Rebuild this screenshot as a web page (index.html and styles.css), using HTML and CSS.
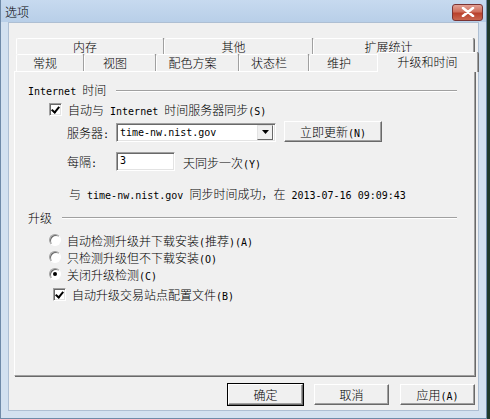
FILE: index.html
```html
<!DOCTYPE html>
<html lang="zh-CN">
   <head>
      <meta charset="UTF-8">
      <meta name="viewport" content="width=device-width, initial-scale=1.0">
      <title>选项</title>
      <link rel="stylesheet" href="styles.css">
   </head>

   <body>
      <div class="window">

         <!-------------------TITLE BAR------------------->
         <div class="titlebar">
            <span class="title">选项</span>
            <span class="close">
               <svg width="14" height="10" viewBox="0 0 14 10">
                  <path d="M2 1 L12 9 M12 1 L2 9" stroke="#fff" stroke-width="2.6" stroke-linecap="round"/>
               </svg>
            </span>
         </div>

         <div class="client">

            <!---------------------TABS---------------------->
            <div class="tab-row back">
               <div class="tab">内存</div>
               <div class="tab">其他</div>
               <div class="tab">扩展统计</div>
            </div>
            <div class="tab-row front">
               <div class="tab">常规</div>
               <div class="tab">视图</div>
               <div class="tab">配色方案</div>
               <div class="tab">状态栏</div>
               <div class="tab">维护</div>
               <div class="tab selected">升级和时间</div>
            </div>

            <!---------------------PANEL--------------------->
            <div class="panel">
               <div class="group-title"><span><span class="en">Internet </span>时间</span><i></i></div>

               <div class="row check-row">
                  <span class="checkbox checked"></span>
                  <span>自动与<span class="en"> Internet </span>时间服务器同步<span class="en">(S)</span></span>
               </div>

               <div class="row server-row">
                  <span class="label">服务器<span class="en">:</span></span>
                  <div class="combo">
                     <span class="combo-text en">time-nw.nist.gov</span>
                     <span class="combo-btn">
                        <svg width="7" height="4" viewBox="0 0 7 4"><path d="M0 0 H7 L3.5 4 Z" fill="#000"/></svg>
                     </span>
                  </div>
                  <button type="button" class="btn update">立即更新<span class="en">(N)</span></button>
               </div>

               <div class="row interval-row">
                  <span class="label">每隔<span class="en">:</span></span>
                  <div class="field en">3</div>
                  <span class="after">天同步一次<span class="en">(Y)</span></span>
               </div>

               <div class="status">与<span class="en"> time-nw.nist.gov </span>同步时间成功，在<span class="en"> 2013-07-16 09:09:43</span></div>

               <div class="group-title upgrade"><span>升级</span><i></i></div>

               <div class="row radio-row first">
                  <span class="radio"></span>
                  <span>自动检测升级并下载安装<span class="en">(</span>推荐<span class="en">)(A)</span></span>
               </div>
               <div class="row radio-row">
                  <span class="radio"></span>
                  <span>只检测升级但不下载安装<span class="en">(O)</span></span>
               </div>
               <div class="row radio-row">
                  <span class="radio checked"></span>
                  <span>关闭升级检测<span class="en">(C)</span></span>
               </div>

               <div class="row check-row site">
                  <span class="checkbox checked"></span>
                  <span>自动升级交易站点配置文件<span class="en">(B)</span></span>
               </div>
            </div>

            <!--------------------BUTTONS-------------------->
            <div class="buttons">
               <button type="button" class="btn default">确定</button>
               <button type="button" class="btn">取消</button>
               <button type="button" class="btn">应用<span class="en">(A)</span></button>
            </div>
         </div>
      </div>
   </body>
</html>
```

FILE: styles.css
```css
*{
   box-sizing: border-box;
   margin: 0;
   padding: 0;
}

body{
   background: #1f3a2c;
   font-family: "Noto Sans CJK SC", sans-serif;
   font-weight: 300;
   font-size: 12px;
   color: #000;
}

.en{
   font-family: "DejaVu Sans Mono", monospace;
   font-weight: 400;
   font-size: 10px;
}

/*******************WINDOW*******************/
.window{
   width: 487px;
   height: 419px;
   background: #d3e1f0;
   border: 1px solid #6f8aa8;
   border-top: none;
   display: flex;
   flex-direction: column;
}

.titlebar{
   height: 22px;
   display: flex;
   align-items: center;
   justify-content: space-between;
   padding: 0 3px 0 4px;
   background: linear-gradient(#c7daef, #b8cfe8);
}

.title{
   font-size: 12px;
   line-height: 14px;
   padding-top: 1px;
}

.close{
   width: 31px;
   height: 17px;
   margin-top: 2px;
   display: flex;
   align-items: center;
   justify-content: center;
   border: 1px solid #7a3434;
   border-radius: 3px;
   background: linear-gradient(#e2a195, #cf6f5d 45%, #b9412c 55%, #c9664f);
}

.client{
   flex: 1;
   margin: 0 7px 7px 7px;
   background: #f0f0f0;
   padding: 15px 3px 0 5px;
   border: 1px solid #aebfd3;
}

/********************TABS********************/
.tab-row{
   display: grid;
   margin-left: 2px;
   height: 16px;
}

.tab-row.back{
   grid-template-columns: 148px 149px 161px;
}

.tab-row.front{
   grid-template-columns: 68px 72px 83px 70px 70px 97px;
   height: 17px;
}

.tab{
   border-top: 1px solid #fff;
   border-left: 1px solid #fff;
   border-right: 1px solid #a0a0a0;
   box-shadow: 1px 0 0 #696969;
   border-radius: 2px 2px 0 0;
   text-align: center;
   line-height: 15px;
   padding-right: 10px;
   background: #f0f0f0;
}

.tab.selected{
   position: relative;
   z-index: 1;
   margin: -2px -2px -1px -2px;
   padding-right: 0;
   line-height: 18px;
}

/*******************PANEL********************/
.panel{
   height: 305px;
   border: 1px solid;
   border-color: #fff #a0a0a0 #a0a0a0 #fff;
   box-shadow: 1px 1px 0 #696969;
   padding: 12px 17px 0 13px;
}

.group-title{
   display: flex;
   align-items: center;
   gap: 10px;
   height: 14px;
   line-height: 14px;
}

.group-title i{
   flex: 1;
   height: 2px;
   border-top: 1px solid #a0a0a0;
   border-bottom: 1px solid #fff;
}

.group-title.upgrade{
   margin-top: 10px;
}

.row{
   display: flex;
   align-items: center;
   padding-left: 21px;
}

.check-row{
   height: 18px;
   margin-top: 2px;
   gap: 6px;
}

.check-row.site{
   margin-top: 3px;
   padding-left: 25px;
}

.checkbox{
   width: 13px;
   height: 13px;
   background: #fff;
   border: 1px solid;
   border-color: #a0a0a0 #fff #fff #a0a0a0;
   box-shadow: inset 1px 1px 0 #696969, inset -1px -1px 0 #e3e3e3;
   position: relative;
}

.checkbox.checked::after{
   content: "";
   position: absolute;
   left: 3px;
   top: 1px;
   width: 3px;
   height: 6px;
   border: solid #000;
   border-width: 0 2px 2px 0;
   transform: rotate(40deg);
}

.server-row{
   height: 22px;
   margin-top: 3px;
   padding-left: 39px;
}

.label{
   width: 49px;
}

.combo{
   width: 160px;
   height: 19px;
   background: #fff;
   border: 1px solid;
   border-color: #a0a0a0 #fff #fff #a0a0a0;
   box-shadow: inset 1px 1px 0 #696969, inset -1px -1px 0 #e3e3e3;
   display: flex;
   align-items: center;
   justify-content: space-between;
   padding: 1px 2px 1px 3px;
}

.combo-btn{
   width: 16px;
   height: 15px;
   background: #f0f0f0;
   border: 1px solid;
   border-color: #e3e3e3 #696969 #696969 #e3e3e3;
   display: flex;
   align-items: center;
   justify-content: center;
}

.btn{
   height: 21px;
   background: #f0f0f0;
   border: 1px solid;
   border-color: #fff #696969 #696969 #fff;
   box-shadow: inset -1px -1px 0 #a0a0a0;
   font-family: "Noto Sans CJK SC", sans-serif;
   font-weight: 300;
   font-size: 12px;
   color: #000;
}

.update{
   width: 98px;
   margin-left: 8px;
   margin-top: -2px;
}

.interval-row{
   height: 20px;
   margin-top: 8px;
   padding-left: 39px;
}

.field{
   width: 59px;
   height: 19px;
   background: #fff;
   border: 1px solid;
   border-color: #a0a0a0 #fff #fff #a0a0a0;
   box-shadow: inset 1px 1px 0 #696969, inset -1px -1px 0 #e3e3e3;
   padding: 1px 3px;
   line-height: 14px;
}

.after{
   margin-left: 8px;
   margin-top: 3px;
}

.status{
   height: 14px;
   line-height: 14px;
   margin-top: 16px;
   padding-left: 41px;
}

.radio-row{
   height: 16px;
   margin-top: 1px;
   gap: 6px;
}

.radio-row.first{
   margin-top: 7px;
}

.radio{
   width: 12px;
   height: 12px;
   border-radius: 50%;
   background: #fff;
   border: 1px solid;
   border-color: #a0a0a0 #fff #fff #a0a0a0;
   box-shadow: inset 1px 1px 0 #696969;
   display: flex;
   align-items: center;
   justify-content: center;
}

.radio.checked::after{
   content: "";
   width: 4px;
   height: 4px;
   border-radius: 50%;
   background: #000;
}

/******************BUTTONS*******************/
.buttons{
   display: flex;
   justify-content: flex-end;
   gap: 11px;
   margin-top: 8px;
}

.buttons .btn{
   width: 75px;
}

.btn.default{
   outline: 1px solid #000;
}
```
